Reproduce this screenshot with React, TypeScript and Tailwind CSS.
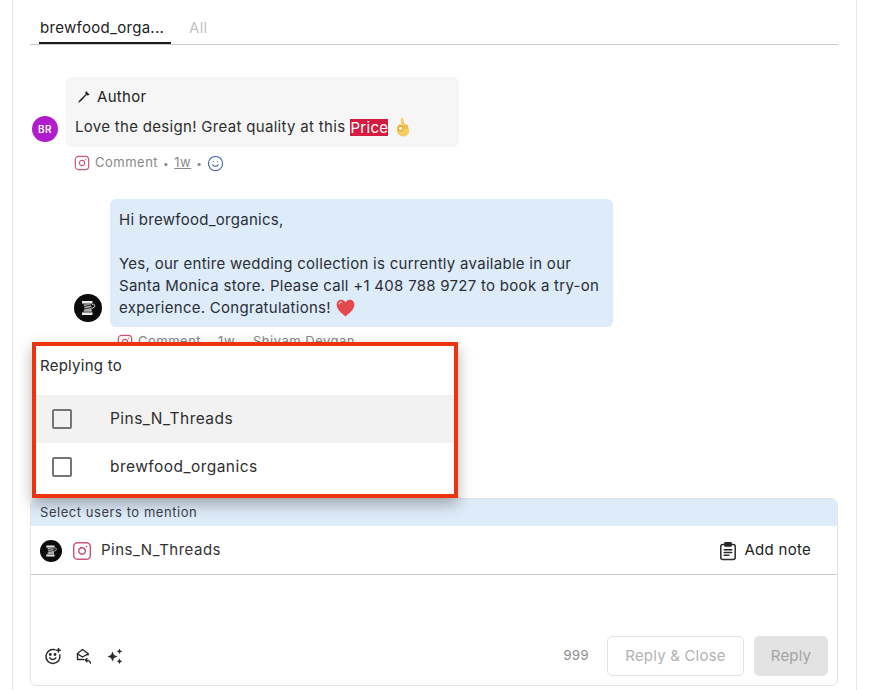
import { Instagram, Smile } from 'lucide-react';

function PinAvatar({ size }: { size: number }) {
  return (
    <svg width={size} height={size} viewBox="0 0 28 28" className="shrink-0">
      <circle cx="14" cy="14" r="14" fill="#0b0b0b" />
      <path d="M8 7h10.500v2.600H8z" fill="#e8e8e8" />
      <path d="M9.500 10.300h7.500l1 7.400H9.500l1-3.700z" fill="#a8a8a8" />
      <path d="M10 12.500l7-1.500M10 15l7-1.500" stroke="#1a1a1a" strokeWidth=".8" />
      <path d="M8 18.400h10.500V21H8z" fill="#e8e8e8" />
      <path d="M18 10.500c2.500-.8 3.500.8 2.500 2.400l-2.500 1.600" stroke="#d0d0d0" strokeWidth="1" fill="none" />
    </svg>
  );
}

function OkEmoji() {
  return (
    <svg width="17" height="20" viewBox="0 0 17 20" className="shrink-0">
      <path d="M3.200 12.500c-.6-2.300.3-4.600 2.600-5.200l1.700-.1L6.800 2.800c-.1-1 .5-1.700 1.300-1.700s1.300.6 1.400 1.500l.7 4 .8.800c.9-.3 1.900-.2 2.500.7.900 1.500 1.900 4.900 1.500 7-.5 2.900-3 4.400-6 4.300-3.200-.1-5.900-2.400-6.600-6.900z" fill="#f5cc62" />
      <circle cx="6.600" cy="11.400" r="2.300" fill="#fdf3d3" stroke="#d9a436" strokeWidth="1.100" />
      <path d="M10.800 7.800l.4 4M13 8.300l.4 3.500" stroke="#d9a436" strokeWidth=".8" fill="none" />
    </svg>
  );
}

function HeartEmoji() {
  return (
    <svg width="19" height="18" viewBox="0 0 18 17" className="shrink-0">
      <path d="M9 16.500C5 13.300.6 10 .6 5.500.6 2.700 2.700.8 5 .8c1.700 0 3.100.9 4 2.400C9.900 1.700 11.300.8 13 .8c2.300 0 4.400 1.900 4.400 4.700 0 4.500-4.400 7.800-8.400 11z" fill="#e5484d" />
      <path d="M3 4.500c.4-1 1.200-1.600 2.300-1.700" stroke="#f7b0b0" strokeWidth="1.200" fill="none" strokeLinecap="round" />
    </svg>
  );
}

function AuthorPen() {
  return (
    <svg width="14" height="14" viewBox="0 0 14 14" className="shrink-0">
      <path d="M9.200 1.500l3 3-1.500.7-.9-.8-6.600 7.200-1.500.7.700-1.600 6.800-6.800-.7-1z" fill="#1f1f1f" stroke="#1f1f1f" strokeWidth=".6" strokeLinejoin="round" />
    </svg>
  );
}

function SmilePlus() {
  return (
    <svg width="18" height="18" viewBox="0 0 18 18" fill="none" stroke="#2a2a2a" strokeWidth="1.500" strokeLinecap="round">
      <path d="M11 2.800A7 7 0 1 0 15.800 8" />
      <path d="M5.800 10.800c1.400 2.200 4.600 2.200 6 0" />
      <circle cx="6.300" cy="7.500" r=".7" fill="#2a2a2a" />
      <circle cx="11" cy="7.500" r=".7" fill="#2a2a2a" />
      <path d="M14.500 1.500v3.600M12.700 3.300h3.600" />
    </svg>
  );
}

function MailReply() {
  return (
    <svg width="18" height="18" viewBox="0 0 18 18" fill="none" stroke="#2a2a2a" strokeWidth="1.400" strokeLinecap="round" strokeLinejoin="round">
      <path d="M8.800 12.500H2.500V6.500L7.500 2.500l5.500 4v1.500" />
      <path d="M2.500 6.800L7.500 10l5.500-3.200" />
      <path d="M12 11.500l-1.800 1.600 1.800 1.600M10.500 13.100c3 -.2 4.500 .8 5 3" />
    </svg>
  );
}

function Sparkles() {
  return (
    <svg width="18" height="18" viewBox="0 0 18 18" fill="#2a2a2a">
      <path d="M6.500 4.500l1.500 3.500 3.500 1.500-3.500 1.500-1.500 3.500-1.500-3.500L1.500 9.500 5 8z" />
      <path d="M13.500 1.500l.9 1.900 1.900.9-1.900.9-.9 1.900-.9-1.900-1.900-.9 1.900-.9z" />
      <path d="M13.500 11.500l.9 1.900 1.900.9-1.900.9-.9 1.900-.9-1.900-1.900-.9 1.900-.9z" />
    </svg>
  );
}

function NoteIcon() {
  return (
    <svg width="18" height="20" viewBox="0 0 18 20" fill="none" stroke="#2a2a2a" strokeWidth="1.500" strokeLinecap="round" strokeLinejoin="round">
      <rect x="1.800" y="3.400" width="14.400" height="15" rx="2" />
      <path d="M6 1.800h6v3.200H6z" fill="#2a2a2a" />
      <path d="M5.200 8.700h7.600M5.200 11.500h7.600M5.200 14.300h4.600" />
    </svg>
  );
}

function ReplyRow({ name, active }: { name: string; active?: boolean }) {
  return (
    <div className={`flex h-12 items-center ${active ? 'bg-[#f2f2f2]' : ''}`}>
      <div className="ml-[16px] h-5 w-5 rounded-[2px] border-2 border-[#757575]" />
      <span className="ml-[38px] text-[15.500px] tracking-[0.45px] text-[#2e2e2e]">{name}</span>
    </div>
  );
}

export default function App() {
  return (
    <div className="relative h-[690px] w-[869px] overflow-hidden bg-white font-['Inter',sans-serif] text-[#2b2b2b]">
      <div className="ml-[12px] flex h-[690px] w-[845px] flex-col border-x border-[#e6e6e6] pl-[17px] pr-[18px]">
        {/* Tabs */}
        <div className="flex h-[45px] items-end border-b border-[#c9c9c9] pl-[9px]">
          <div className="flex h-[28px] w-[132px] items-start border-b-2 border-[#1c1c1c] pl-[1px] text-[15px] leading-[24px] tracking-[0.3px] text-[#222]">
            brewfood_orga...
          </div>
          <div className="ml-[18px] h-[28px] text-[15px] leading-[24px] tracking-[0.3px] text-[#c4c4c4]">All</div>
        </div>

        {/* Customer comment */}
        <div className="mt-[32px] flex items-end">
          <div className="mb-[5px] ml-[2px] flex h-[26px] w-[26px] items-center justify-center rounded-full bg-[#b01ccb] text-[10px] font-semibold tracking-[0.5px] text-white">
            BR
          </div>
          <div className="ml-[8px] flex h-[70px] w-[393px] flex-col rounded-md bg-[#f6f6f6] pl-[9px] pt-[10px]">
            <div className="flex items-center gap-[6px] pl-[2px] text-[15px] leading-[20px] tracking-[0.3px] text-[#222]">
              <AuthorPen />
              <span>Author</span>
            </div>
            <div className="mt-[10px] flex items-center text-[15px] leading-[20px] tracking-[0.31px] text-[#2e2e2e]">
              <span>Love the design! Great quality at this</span>
              <span className="ml-[5px] bg-[#d31c3f] leading-[17px] text-white">Price</span>
              <span className="ml-[6px]"><OkEmoji /></span>
            </div>
          </div>
        </div>
        <div className="ml-[44px] mt-[8px] flex h-[16px] items-center text-[13px] tracking-[0.5px] text-[#8a8a8a]">
          <Instagram size={16} color="#c9587e" strokeWidth={1.800} />
          <span className="ml-[5px]">Comment</span>
          <span className="mx-[5px] text-[10px]">•</span>
          <span className="underline">1w</span>
          <span className="mx-[5px] text-[10px]">•</span>
          <Smile size={17} color="#3f5f9e" strokeWidth={1.500} />
        </div>

        {/* Brand reply */}
        <div className="mt-[28px] flex items-end">
          <div className="mb-[5px] ml-[44px]"><PinAvatar size={28} /></div>
          <div className="ml-[8px] h-[128px] w-[503px] rounded-md bg-[#deebf9] pl-[9px] pt-[10px] text-[15px] leading-[22px] tracking-[0.28px] text-[#2a2f36]">
            <p>Hi brewfood_organics,</p>
            <p className="mt-[22px]">Yes, our entire wedding collection is currently available in our</p>
            <p>Santa Monica store. Please call +1 408 788 9727 to book a try-on</p>
            <p className="flex items-center">
              experience. Congratulations!
              <span className="ml-[5px]"><HeartEmoji /></span>
            </p>
          </div>
        </div>
        <div className="ml-[87px] mt-[7px] flex h-[16px] items-center gap-[5px] text-[13px] tracking-[0.5px] text-[#8a8a8a]">
          <Instagram size={16} color="#c9587e" strokeWidth={1.800} />
          <span>Comment</span>
          <span className="ml-[12px]">1w</span>
          <span className="ml-[13px]">Shivam Devgan</span>
        </div>

        {/* Composer */}
        <div className="mt-[148px] flex h-[188px] flex-col rounded-md border border-[#e4e4e4]">
          <div className="flex h-[27px] items-center rounded-t-md bg-[#deebf9] pl-[9px] text-[13px] tracking-[0.55px] text-[#3b4148]">
            Select users to mention
          </div>
          <div className="flex h-[49px] items-center border-b border-[#c9c9c9] pb-[0px] pl-[9px] pr-[26px] pt-[1px]">
            <PinAvatar size={22} />
            <Instagram size={20} color="#c9587e" strokeWidth={1.800} className="ml-[10px]" />
            <span className="ml-[9px] text-[15px] tracking-[0.5px] text-[#333]">Pins_N_Threads</span>
            <div className="ml-auto flex items-center gap-[7px] text-[15px] tracking-[0.28px] text-[#222]">
              <NoteIcon />
              <span>Add note</span>
            </div>
          </div>
          <div className="flex flex-1 items-end justify-between pb-[9px] pl-[13px] pr-[9px]">
            <div className="mb-[11px] flex items-center gap-[13px]">
              <SmilePlus />
              <MailReply />
              <Sparkles />
            </div>
            <div className="flex items-center">
              <span className="mr-[18px] text-[13px] tracking-[0.4px] text-[#8a8a8a]">999</span>
              <div className="flex h-[40px] w-[137px] items-center justify-center rounded-[5px] border border-[#e2e2e2] text-[15px] tracking-[0.2px] text-[#b3b3b3]">
                Reply &amp; Close
              </div>
              <div className="ml-[10px] flex h-[40px] w-[74px] items-center justify-center rounded-[5px] bg-[#e3e3e3] text-[15px] tracking-[0.2px] text-[#a3a3a3]">
                Reply
              </div>
            </div>
          </div>
        </div>
      </div>

      {/* Replying to popup */}
      <div className="absolute left-[32px] top-[342px] h-[156px] w-[426px] border-[4px] border-[#ee3311] bg-white shadow-[0_6px_14px_rgba(0,0,0,0.3)]">
        <div className="flex h-[49px] items-start pl-[4px] pt-[10px] text-[15px] leading-[20px] tracking-[0.25px] text-[#2b2b2b]">
          Replying to
        </div>
        <ReplyRow name="Pins_N_Threads" active />
        <ReplyRow name="brewfood_organics" />
      </div>
    </div>
  );
}
